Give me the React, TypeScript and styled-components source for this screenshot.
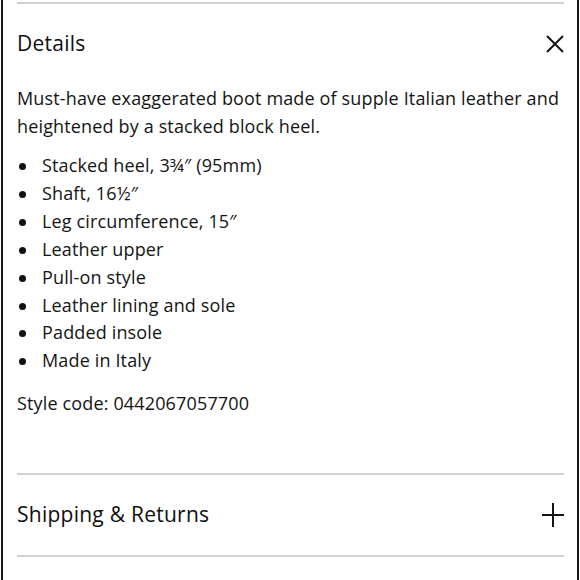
import { FC } from "react";
import styled, { createGlobalStyle } from "styled-components";

const GlobalStyle = createGlobalStyle`
	html, body {
		margin: 0;
		padding: 0;
		background: #ffffff;
	}

	body {
		font-family: "Open Sans", "Liberation Sans", sans-serif;
		color: #141414;
	}
`;

const bullets = [
	"Stacked heel, 3¾″ (95mm)",
	"Shaft, 16½″",
	"Leg circumference, 15″",
	"Leather upper",
	"Pull-on style",
	"Leather lining and sole",
	"Padded insole",
	"Made in Italy",
];

const CloseIcon: FC = () => (
	<svg width="18" height="18" viewBox="0 0 18 18" fill="none">
		<path d="M1 1L17 17M17 1L1 17" stroke="#141414" strokeWidth="2" />
	</svg>
);

const PlusIcon: FC = () => (
	<svg width="22" height="24" viewBox="0 0 22 24" fill="none">
		<path d="M11 0V24M0 12H22" stroke="#141414" strokeWidth="2" />
	</svg>
);

const App: FC = () => {
	return (
		<>
			<GlobalStyle />
			<Frame>
				<Panel>
					<Divider />
					<SectionHeader>
						<SectionTitle>Details</SectionTitle>
						<IconButton aria-label="Close">
							<CloseIcon />
						</IconButton>
					</SectionHeader>
					<Body>
						<Paragraph>
							Must-have exaggerated boot made of supple Italian leather and heightened by a stacked
							block heel.
						</Paragraph>
						<BulletList>
							{bullets.map((item) => (
								<BulletItem key={item}>{item}</BulletItem>
							))}
						</BulletList>
						<Paragraph>Style code: 0442067057700</Paragraph>
					</Body>
					<Divider />
					<SectionHeader>
						<SectionTitle>Shipping &amp; Returns</SectionTitle>
						<IconButton aria-label="Expand">
							<PlusIcon />
						</IconButton>
					</SectionHeader>
					<Divider />
				</Panel>
			</Frame>
		</>
	);
};

export default App;

const Frame = styled.div`
	width: 580px;
	height: 580px;
	padding: 0 1px;
	box-sizing: border-box;
	overflow: hidden;
`;

const Panel = styled.div`
	height: 100%;
	box-sizing: border-box;
	border-left: 2px solid #151515;
	border-right: 2px solid #151515;
	padding: 2px 13px 0 14px;
	display: flex;
	flex-direction: column;
`;

const Divider = styled.div`
	height: 2px;
	background: #d2d2d2;
	flex-shrink: 0;
`;

const SectionHeader = styled.div`
	display: flex;
	align-items: center;
	justify-content: space-between;
	height: 80px;
`;

const SectionTitle = styled.h2`
	margin: 0 0 2px;
	font-size: 21px;
	font-weight: 500;
	letter-spacing: 0.25px;
	color: #0f0f0f;
`;

const IconButton = styled.button`
	border: none;
	background: transparent;
	padding: 0;
	display: flex;
	align-items: center;
	justify-content: center;
	cursor: pointer;
`;

const Body = styled.div`
	font-size: 18px;
	line-height: 28px;
	letter-spacing: 0.15px;
	color: #141414;
	padding-bottom: 56px;
`;

const Paragraph = styled.p`
	margin: 0;
`;

const BulletList = styled.ul`
	list-style: none;
	margin: 12px 0 14px;
	padding: 0;
`;

const BulletItem = styled.li`
	position: relative;
	padding-left: 25px;
	line-height: 27.9px;

	&::before {
		content: "";
		position: absolute;
		left: 2px;
		top: 11px;
		width: 7px;
		height: 7px;
		border-radius: 50%;
		background: #111111;
	}
`;
